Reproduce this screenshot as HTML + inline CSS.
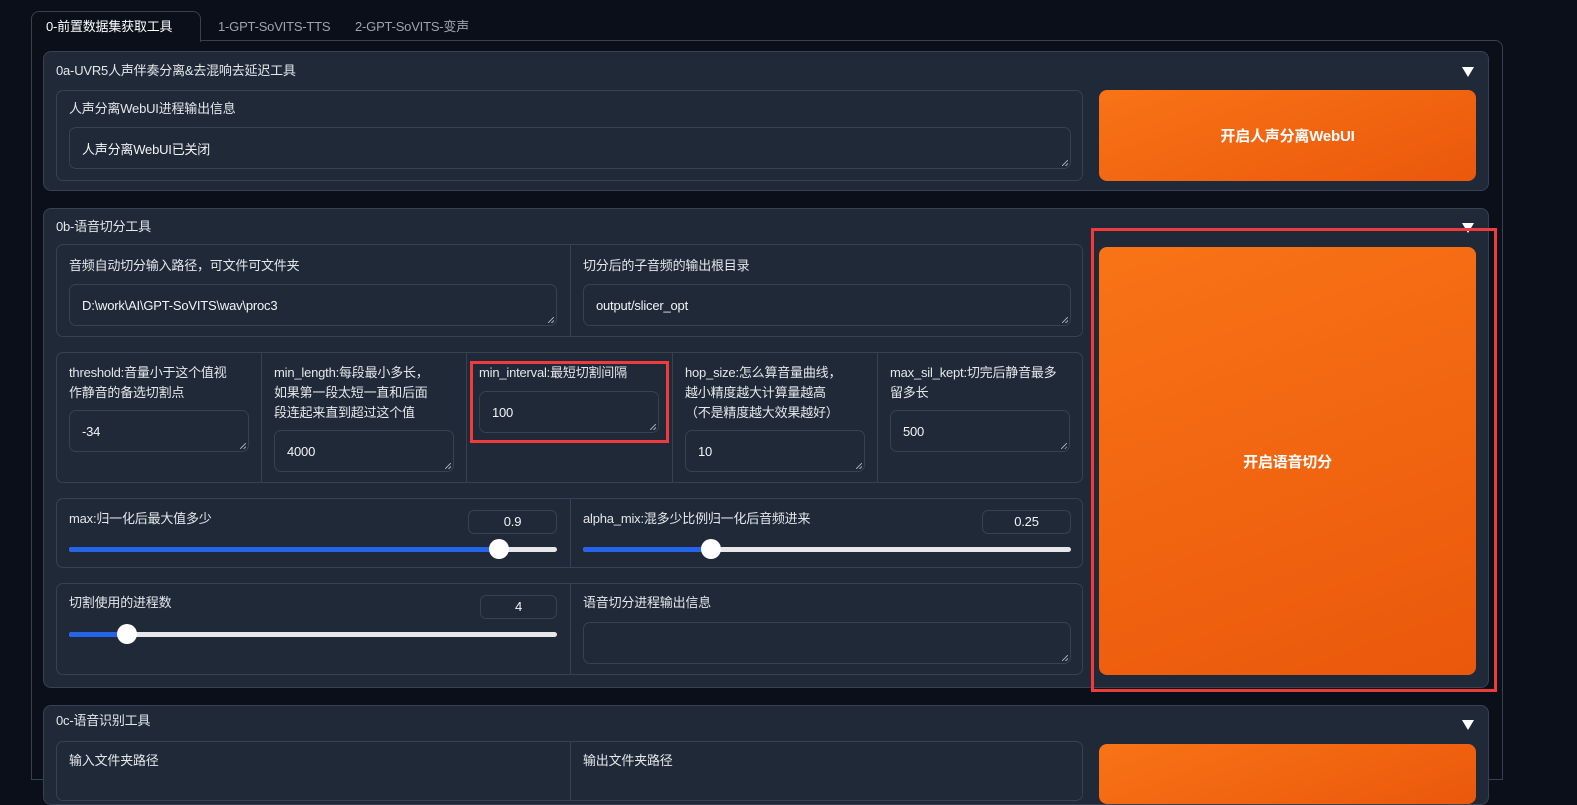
<!DOCTYPE html>
<html><head><meta charset="utf-8"><style>
*{box-sizing:border-box;margin:0;padding:0}
body{width:1577px;height:771px;background:#0b0f19;overflow:hidden;position:relative;font-family:"Liberation Sans","Noto Sans CJK SC",sans-serif;font-size:13px;color:#e5e7eb;letter-spacing:-0.2px}
.a{position:absolute}
.blk{position:absolute;background:#1f2937;border:1px solid #374151;border-radius:8px}
.box{position:absolute;border:1px solid #374151;border-radius:7px;background:#1f2937}
.ta{position:absolute;border:1px solid #374151;border-radius:7px;background:#1f2937;padding:0 12px;display:flex;align-items:center;color:#f3f4f6}
.ta:after{content:"";position:absolute;right:2px;bottom:2px;width:6px;height:6px;background:linear-gradient(135deg,transparent 45%,#9ca3af 45%,#9ca3af 55%,transparent 55%,transparent 75%,#9ca3af 75%,#9ca3af 85%,transparent 85%)}
.lbl{position:absolute;line-height:20px;color:#e5e7eb;white-space:nowrap}
.btn{position:absolute;border-radius:8px;background:linear-gradient(160deg,#f97316,#ea580c);color:#fff;font-weight:bold;font-size:15px;display:flex;align-items:center;justify-content:center}
.tri{position:absolute;width:0;height:0;border-left:6px solid transparent;border-right:6px solid transparent;border-top:10px solid #fff}
.vl{position:absolute;width:1px;background:#374151}
.num{position:absolute;border:1px solid #374151;border-radius:6px;text-align:center;line-height:22px;height:24px;color:#f3f4f6}
.tr{position:absolute;height:5px;border-radius:3px;background:#e5e7eb}
.fill{position:absolute;left:0;top:0;height:5px;border-radius:3px;background:#2563eb}
.th{position:absolute;width:20px;height:20px;border-radius:50%;background:#fff;top:-8px}
.red{position:absolute;border:3px solid #ef3b3b}
</style></head><body>
<div class="a" style="left:31px;top:40px;width:1472px;height:740px;border:1px solid #374151;border-radius:0 8px 0 0"></div>
<div class="a" style="left:31px;top:11px;width:170px;height:31px;background:#0b0f19;border:1px solid #374151;border-bottom:none;border-radius:8px 8px 0 0"></div>
<div class="a" style="left:46px;top:17px;line-height:20px;color:#fff">0-前置数据集获取工具</div>
<div class="a" style="left:218px;top:17px;line-height:20px;color:#9ca3af">1-GPT-SoVITS-TTS</div>
<div class="a" style="left:355px;top:17px;line-height:20px;color:#9ca3af">2-GPT-SoVITS-变声</div>

<div class="blk" style="left:43px;top:51px;width:1446px;height:140px"></div>
<div class="lbl" style="left:56px;top:61px">0a-UVR5人声伴奏分离&amp;去混响去延迟工具</div>
<div class="tri" style="left:1462px;top:67px"></div>
<div class="box" style="left:56px;top:90px;width:1027px;height:91px"></div>
<div class="lbl" style="left:69px;top:99px">人声分离WebUI进程输出信息</div>
<div class="ta" style="left:69px;top:127px;width:1002px;height:42px">人声分离WebUI已关闭</div>
<div class="btn" style="left:1099px;top:90px;width:377px;height:91px">开启人声分离WebUI</div>

<div class="blk" style="left:43px;top:208px;width:1446px;height:480px"></div>
<div class="lbl" style="left:56px;top:217px">0b-语音切分工具</div>
<div class="tri" style="left:1462px;top:223px"></div>
<div class="box" style="left:56px;top:244px;width:1027px;height:93px"></div>
<div class="vl" style="left:570px;top:244px;height:93px"></div>
<div class="lbl" style="left:69px;top:256px">音频自动切分输入路径，可文件可文件夹</div>
<div class="ta" style="left:69px;top:284px;width:488px;height:42px">D:\work\AI\GPT-SoVITS\wav\proc3</div>
<div class="lbl" style="left:583px;top:256px">切分后的子音频的输出根目录</div>
<div class="ta" style="left:583px;top:284px;width:488px;height:42px">output/slicer_opt</div>

<div class="box" style="left:56px;top:352px;width:1027px;height:131px"></div>
<div class="vl" style="left:261px;top:352px;height:131px"></div>
<div class="vl" style="left:466px;top:352px;height:131px"></div>
<div class="vl" style="left:672px;top:352px;height:131px"></div>
<div class="vl" style="left:877px;top:352px;height:131px"></div>
<div class="lbl" style="left:69px;top:363px">threshold:音量小于这个值视<br>作静音的备选切割点</div>
<div class="ta" style="left:69px;top:410px;width:180px;height:42px">-34</div>
<div class="lbl" style="left:274px;top:363px">min_length:每段最小多长，<br>如果第一段太短一直和后面<br>段连起来直到超过这个值</div>
<div class="ta" style="left:274px;top:430px;width:180px;height:42px">4000</div>
<div class="lbl" style="left:479px;top:363px">min_interval:最短切割间隔</div>
<div class="ta" style="left:479px;top:391px;width:180px;height:42px">100</div>
<div class="red" style="left:470px;top:361px;width:199px;height:82px"></div>
<div class="lbl" style="left:685px;top:363px">hop_size:怎么算音量曲线，<br>越小精度越大计算量越高<br>（不是精度越大效果越好）</div>
<div class="ta" style="left:685px;top:430px;width:180px;height:42px">10</div>
<div class="lbl" style="left:890px;top:363px">max_sil_kept:切完后静音最多<br>留多长</div>
<div class="ta" style="left:890px;top:410px;width:180px;height:42px">500</div>

<div class="box" style="left:56px;top:498px;width:1027px;height:70px"></div>
<div class="vl" style="left:570px;top:498px;height:70px"></div>
<div class="lbl" style="left:69px;top:509px">max:归一化后最大值多少</div>
<div class="num" style="left:468px;top:510px;width:89px">0.9</div>
<div class="tr" style="left:69px;top:547px;width:488px"><div class="fill" style="width:430px"></div><div class="th" style="left:420px"></div></div>
<div class="lbl" style="left:583px;top:509px">alpha_mix:混多少比例归一化后音频进来</div>
<div class="num" style="left:982px;top:510px;width:89px">0.25</div>
<div class="tr" style="left:583px;top:547px;width:488px"><div class="fill" style="width:128px"></div><div class="th" style="left:118px"></div></div>

<div class="box" style="left:56px;top:583px;width:1027px;height:92px"></div>
<div class="vl" style="left:570px;top:583px;height:92px"></div>
<div class="lbl" style="left:69px;top:593px">切割使用的进程数</div>
<div class="num" style="left:480px;top:595px;width:77px">4</div>
<div class="tr" style="left:69px;top:632px;width:488px"><div class="fill" style="width:58px"></div><div class="th" style="left:48px"></div></div>
<div class="lbl" style="left:583px;top:593px">语音切分进程输出信息</div>
<div class="ta" style="left:583px;top:622px;width:488px;height:42px"></div>

<div class="btn" style="left:1099px;top:247px;width:377px;height:428px">开启语音切分</div>
<div class="red" style="left:1091px;top:228px;width:406px;height:464px"></div>

<div class="blk" style="left:43px;top:705px;width:1446px;height:100px"></div>
<div class="lbl" style="left:56px;top:711px">0c-语音识别工具</div>
<div class="tri" style="left:1462px;top:720px"></div>
<div class="box" style="left:56px;top:741px;width:1027px;height:60px"></div>
<div class="vl" style="left:570px;top:741px;height:60px"></div>
<div class="lbl" style="left:69px;top:751px">输入文件夹路径</div>
<div class="lbl" style="left:583px;top:751px">输出文件夹路径</div>
<div class="btn" style="left:1099px;top:744px;width:377px;height:60px"></div>
</body></html>
